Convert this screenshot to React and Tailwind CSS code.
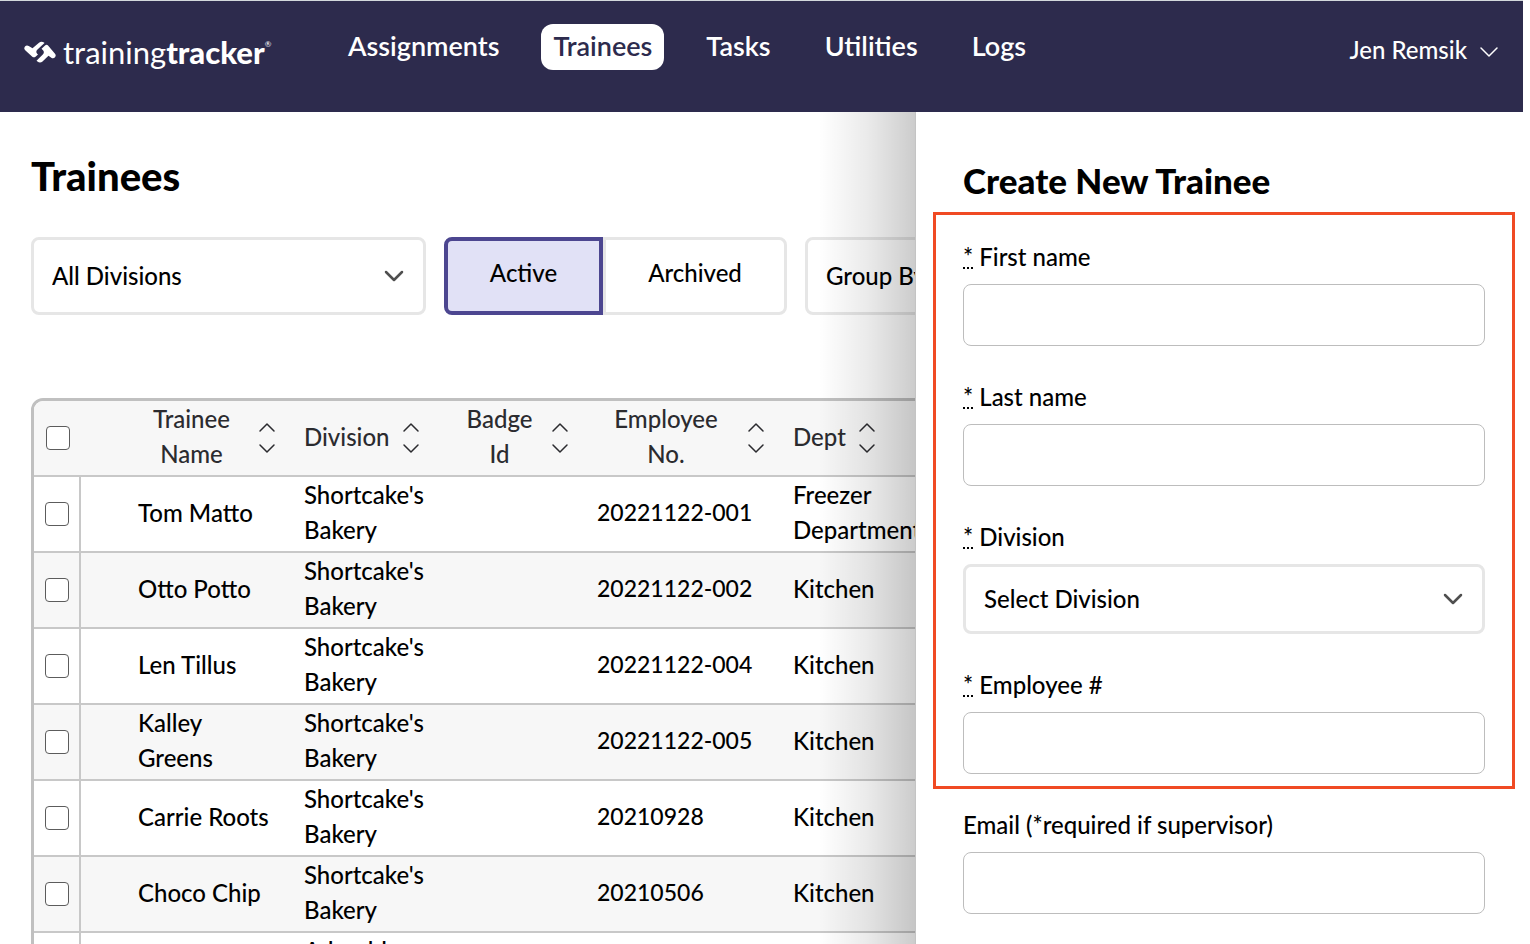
import React from "react";

const NAV = ["Assignments", "Trainees", "Tasks", "Utilities", "Logs"];

const COLUMNS = [
  { lines: ["Trainee", "Name"], pad: "pl-[57px]" },
  { lines: ["Division"], pad: "" },
  { lines: ["Badge", "Id"], pad: "" },
  { lines: ["Employee", "No."], pad: "" },
  { lines: ["Dept"], pad: "" },
];

const ROWS = [
  { name: "Tom Matto", division: "Shortcake's Bakery", no: "20221122-001", dept: "Freezer Department" },
  { name: "Otto Potto", division: "Shortcake's Bakery", no: "20221122-002", dept: "Kitchen" },
  { name: "Len Tillus", division: "Shortcake's Bakery", no: "20221122-004", dept: "Kitchen" },
  { name: "Kalley Greens", division: "Shortcake's Bakery", no: "20221122-005", dept: "Kitchen" },
  { name: "Carrie Roots", division: "Shortcake's Bakery", no: "20210928", dept: "Kitchen" },
  { name: "Choco Chip", division: "Shortcake's Bakery", no: "20210506", dept: "Kitchen" },
  { name: "", division: "Adorable Bakery", no: "", dept: "" },
];

function Chevron({ className, strokeWidth = 2 }) {
  return (
    <svg
      viewBox="0 0 20 12"
      className={className}
      fill="none"
      stroke="currentColor"
      strokeWidth={strokeWidth}
      strokeLinecap="round"
      strokeLinejoin="round"
      aria-hidden="true"
    >
      <path d="M2 2l8 8 8-8" />
    </svg>
  );
}

function SortIcon() {
  return (
    <svg
      viewBox="0 0 18 32"
      className="h-8 w-[18px] shrink-0"
      fill="none"
      stroke="currentColor"
      strokeWidth="1.5"
      strokeLinecap="round"
      strokeLinejoin="round"
      aria-hidden="true"
    >
      <path d="M2 9l7-7 7 7M2 23l7 7 7-7" />
    </svg>
  );
}

function Logo() {
  return (
    <a href="#home" className="flex items-center text-white">
      <svg viewBox="0 0 32 22" className="h-[22px] w-8" fill="currentColor" aria-hidden="true">
        <path d="M1 5.500C2 4.300 3.500 4.200 4.700 5L8.500 7.300 15 1.700C16.500 .3 18.500 .3 20 1.600L20.500 2 13.500 8.500C12 10 12 11.500 13.200 12.800L14 13.600 11.500 15.800C10.500 16.600 9.300 16.500 8.300 15.700L1.200 9.200C0 8.200 0 6.700 1 5.500Z" />
        <path d="M31 16.200C30 17.500 28.500 17.500 27.300 16.700L24.500 14.800 18.500 20.500C17 21.800 15 21.800 13.500 20.500L12.500 19.700 18.800 13.400C20.200 12 20.200 10.500 19 9.200L17.500 7.800 21.300 4.200C22 3.500 23 3.500 23.800 4.200L30.800 12.500C32 13.700 32 15 31 16.200Z" />
      </svg>
      <span className="ml-[7px] text-[31px] leading-10">
        training<b className="font-black">tracker</b>
      </span>
      <span className="mb-4 text-[8px] leading-3">®</span>
    </a>
  );
}

function Checkbox({ label }) {
  return (
    <input
      type="checkbox"
      aria-label={label}
      className="block size-6 appearance-none rounded-[4px] border border-[#5c5c5c] bg-white"
    />
  );
}

function SelectBox({ id, label, text, className }) {
  return (
    <div className="relative">
      <select
        id={id}
        aria-label={label}
        className={`block w-full appearance-none rounded-lg border-[3px] border-[#e6e6e6] bg-white pl-[18px] text-2xl font-medium text-black ${className}`}
      >
        <option>{text}</option>
      </select>
      <Chevron
        className="pointer-events-none absolute top-1/2 right-[22px] h-3 w-5 -translate-y-1/2 text-[#4f4f4f]"
        strokeWidth={2.5}
      />
    </div>
  );
}

function Field({ id, label, required, children }) {
  return (
    <div>
      <label htmlFor={id} className="mb-[10px] block text-2xl leading-[34px] font-medium">
        {required && (
          <>
            <abbr title="required" className="underline decoration-dotted decoration-2 underline-offset-1">
              *
            </abbr>{" "}
          </>
        )}
        {label}
      </label>
      {children || (
        <input id={id} type="text" className="block h-[62px] w-full rounded-lg border border-[#bdbdbd] px-4 text-2xl" />
      )}
    </div>
  );
}

function Header() {
  return (
    <header className="flex h-28 shrink-0 items-start justify-between border-t border-[#d3d9dc] bg-[#2d2b4d] px-6 text-white">
      <div className="flex items-start">
        <div className="mt-[31px] w-[312px]">
          <Logo />
        </div>
        <nav className="mt-[23px] flex gap-[30px]">
          {NAV.map((item) => (
            <a
              key={item}
              href={`#${item.toLowerCase()}`}
              className={`rounded-xl px-3 pb-[2px] text-[27px] leading-[44px] font-semibold ${
                item === "Trainees" ? "bg-white text-[#2d2b4d]" : ""
              }`}
            >
              {item}
            </a>
          ))}
        </nav>
      </div>
      <button type="button" className="mt-[31px] flex items-center gap-3 text-2xl leading-9 font-medium">
        Jen Remsik
        <Chevron className="mt-1 h-3 w-5" strokeWidth={1.5} />
      </button>
    </header>
  );
}

function Toolbar() {
  return (
    <div className="mt-[38px] flex w-max gap-[18px]">
      <div className="w-[395px]">
        <SelectBox id="divisions" label="Divisions" text="All Divisions" className="h-[78px]" />
      </div>
      <div className="flex text-2xl font-medium">
        <button type="button" className="w-[159px] rounded-l-lg border-4 border-[#4c4690] bg-[#e1e1f6] pb-[6px]">
          Active
        </button>
        <button type="button" className="w-[184px] rounded-r-lg border-[3px] border-[#e6e6e6] bg-white pb-[6px]">
          Archived
        </button>
      </div>
      <div className="w-[260px]">
        <SelectBox id="group-by" label="Group by" text="Group By" className="h-[78px]" />
      </div>
    </div>
  );
}

function TraineeTable() {
  return (
    <div className="mt-[83px] w-[920px] overflow-hidden rounded-xl border-[3px] border-[#c0c0c0]">
      <table className="w-full table-fixed border-collapse text-left text-2xl leading-[35px] font-medium">
        <colgroup>
          <col className="w-[46px]" />
          <col className="w-[224px]" />
          <col className="w-[156px]" />
          <col className="w-[137px]" />
          <col className="w-[196px]" />
          <col />
        </colgroup>
        <thead>
          <tr className="h-[75px] border-b-2 border-[#c8c8c8] bg-[#f7f7f7] text-[#2b2b2f]">
            <th className="p-0 pl-3">
              <Checkbox label="Select all trainees" />
            </th>
            {COLUMNS.map((column) => (
              <th key={column.lines[0]} className={`p-0 pr-7 font-medium ${column.pad}`}>
                <button
                  type="button"
                  className={`flex items-center gap-3 text-center ${column.lines.length > 1 ? "w-full" : ""}`}
                >
                  <span className="flex-1 pb-1">
                    {column.lines.map((line) => (
                      <span key={line} className="block">
                        {line}
                      </span>
                    ))}
                  </span>
                  <SortIcon />
                </button>
              </th>
            ))}
          </tr>
        </thead>
        <tbody>
          {ROWS.map((row, index) => (
            <tr key={index} className="h-[76px] border-b-2 border-[#c8c8c8] even:bg-[#f7f7f7]">
              <td className="border-r-2 border-[#c8c8c8] p-0 pl-[11px]">
                <Checkbox label={`Select ${row.name || "trainee"}`} />
              </td>
              <td className="p-0 pr-7 pb-1 pl-[57px]">{row.name}</td>
              <td className="p-0 pr-6 pb-1">{row.division}</td>
              <td className="p-0" />
              <td className="p-0 pb-1 text-[23px] whitespace-nowrap">{row.no}</td>
              <td className="p-0 pb-1">{row.dept}</td>
            </tr>
          ))}
        </tbody>
      </table>
    </div>
  );
}

function CreatePanel() {
  return (
    <aside className="w-[608px] shrink-0 border-l border-[#c4c4c4] bg-white pt-[45px] pr-2 pl-[17px]">
      <h2 className="pl-[30px] text-[35px] leading-[46px] font-black">Create New Trainee</h2>
      <form>
        <div className="mt-[9px] flex flex-col gap-[34px] border-[3px] border-[#f04a23] px-[27px] pt-[25px] pb-3">
          <Field id="first-name" label="First name" required />
          <Field id="last-name" label="Last name" required />
          <Field id="division" label="Division" required>
            <SelectBox id="division" text="Select Division" className="h-[70px]" />
          </Field>
          <Field id="employee-number" label="Employee #" required />
        </div>
        <div className="mt-[19px] px-[30px]">
          <Field id="email" label="Email (*required if supervisor)" />
        </div>
      </form>
    </aside>
  );
}

export default function App() {
  return (
    <div className="flex h-screen flex-col overflow-hidden bg-white pr-[7px] font-['Lato',sans-serif] text-black">
      <Header />
      <div className="flex min-h-0 flex-1">
        <main className="relative min-w-0 flex-1 overflow-hidden pt-[41px] pl-[31px]">
          <h1 className="text-[40px] leading-[46px] font-black">Trainees</h1>
          <Toolbar />
          <TraineeTable />
          <div className="pointer-events-none absolute inset-y-0 right-0 w-24 bg-gradient-to-r from-black/0 via-black/8 to-black/20" />
        </main>
        <CreatePanel />
      </div>
    </div>
  );
}
